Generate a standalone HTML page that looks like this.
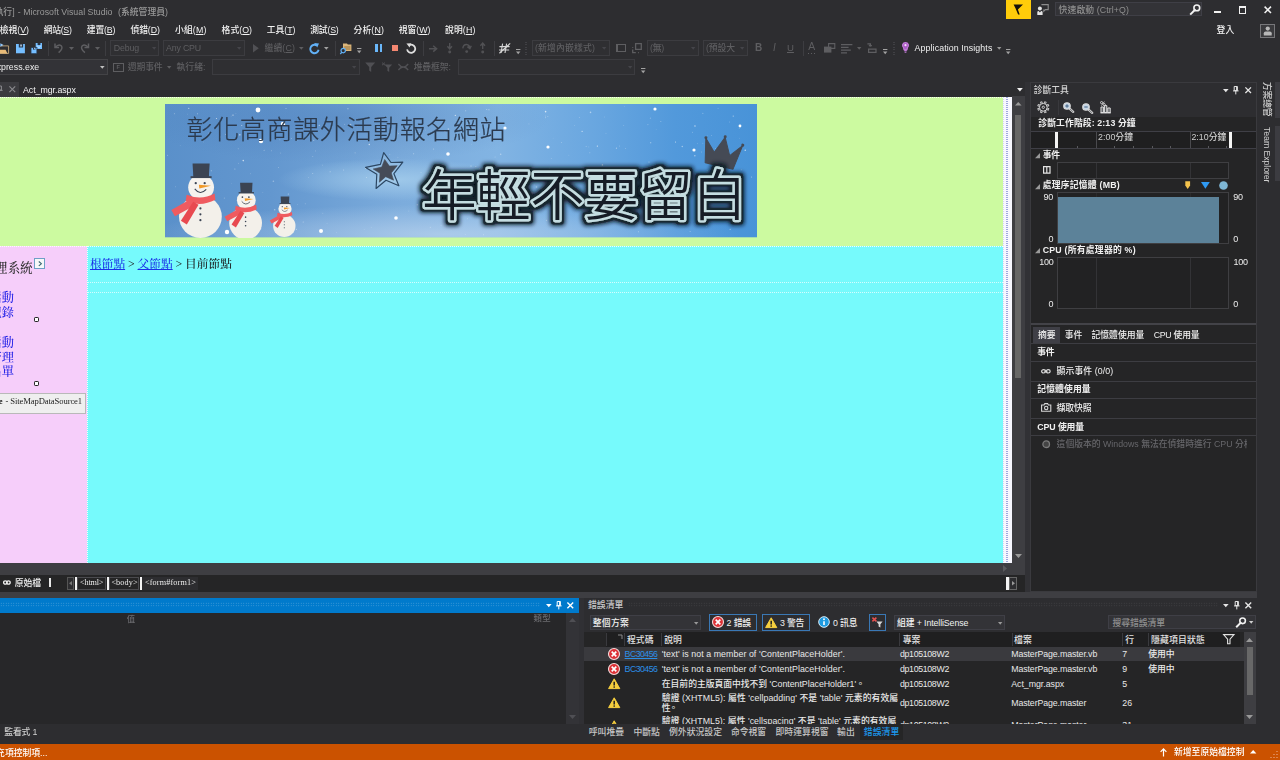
<!DOCTYPE html>
<html lang="zh-Hant">
<head>
<meta charset="utf-8">
<title>Microsoft Visual Studio</title>
<style>
*{box-sizing:border-box;margin:0;padding:0}
html,body{width:1280px;height:760px;overflow:hidden;background:#2d2d30}
body{position:relative;font-family:"Liberation Sans","Noto Sans CJK TC","Noto Sans CJK SC",sans-serif;font-size:8.8px;font-weight:500;color:#f1f1f1;line-height:12px}
.a{position:absolute}
.t{position:absolute;white-space:nowrap;line-height:12px;height:12px}
svg{position:absolute;overflow:visible;display:block}
u{text-decoration:underline}
</style>
</head>
<body>
<div id="t1" class="t" style="right:1265.4px;top:6.3px;color:#999">[執行]</div>
<div id="t2" class="t" style="left:17.8px;top:6.3px;color:#999;letter-spacing:0px">- Microsoft Visual Studio</div>
<div id="t3" class="t" style="left:118px;top:6.3px;color:#999;letter-spacing:0.02px">(系統管理員)</div>
<div class="a" style="left:1005.9px;top:0px;width:25.3px;height:19.2px;background:#ffcc0a"></div>
<svg style="left:1012px;top:4px" width="11" height="11" viewBox="0 0 11 11"><path d="M1.6 0.5H11L5.9 5.6L7.7 10.5H6.1L3.6 4.4Z" fill="#17120a"/></svg>
<svg style="left:1036.5px;top:4px" width="12" height="12" viewBox="0 0 12 12"><path d="M4.4 0.6H11.2V5.6H8.4L6.8 7.2V5.6" fill="none" stroke="#8c8c8c" stroke-width="1.1"/><circle cx="2.9" cy="4.4" r="2" fill="#e4e4e4"/><path d="M0.3 11V8.2Q0.3 6.9 1.6 6.9L2.9 8.6L4.2 6.9Q5.6 6.9 5.6 8.2V11Z" fill="#e4e4e4"/></svg>
<div class="a" style="left:1054.7px;top:1.7px;width:147.7px;height:14.8px;background:#333337;border:1px solid #3f3f46"></div>
<div id="t4" class="t" style="left:1058.6px;top:3.8px;color:#8f8f8f;letter-spacing:0.1px">快速啟動 (Ctrl+Q)</div>
<svg style="left:1189.5px;top:4px" width="11" height="11" viewBox="0 0 11 11"><circle cx="6.8" cy="3.9" r="2.9" fill="none" stroke="#f1f1f1" stroke-width="1.6"/><path d="M4.8 6L0.9 9.9" stroke="#f1f1f1" stroke-width="2" stroke-linecap="square"/></svg>
<div class="a" style="left:1214px;top:10.6px;width:7.2px;height:2.4px;background:#f1f1f1"></div>
<div class="a" style="left:1238.6px;top:6.3px;width:7.6px;height:7.4px;border:1px solid #f1f1f1;border-top-width:2.4px"></div>
<svg style="left:1263.6px;top:6.3px" width="7.6" height="7.6" viewBox="0 0 7.6 7.6"><path d="M0.6 0.6L7 7M7 0.6L0.6 7" stroke="#f1f1f1" stroke-width="1.5"/></svg>
<div id="t5" class="t" style="left:1216.6px;top:24.2px;color:#f2f2f2;letter-spacing:0.2px">登入</div>
<div class="a" style="left:1260px;top:23.6px;width:14.5px;height:14px;background:#3a3a3d;border:1px solid #77777a"></div>
<svg style="left:1262.5px;top:26px" width="9.5" height="10" viewBox="0 0 9.5 10"><circle cx="4.75" cy="2.6" r="2.1" fill="#b8b8b8"/><path d="M0.8 9.6V7.2Q0.8 5.4 2.6 5.4H6.9Q8.7 5.4 8.7 7.2V9.6Z" fill="#b8b8b8"/></svg>
<div id="t6" class="t" style="left:-0.2px;top:23.7px;color:#f2f2f2;letter-spacing:-0.03px">檢視(<u>V</u>)</div>
<div id="t7" class="t" style="left:43.8px;top:23.7px;color:#f2f2f2;letter-spacing:-0.33px">網站(<u>S</u>)</div>
<div id="t8" class="t" style="left:86.8px;top:23.7px;color:#f2f2f2;letter-spacing:-0.17px">建置(<u>B</u>)</div>
<div id="t9" class="t" style="left:130.5px;top:23.7px;color:#f2f2f2;letter-spacing:-0.13px">偵錯(<u>D</u>)</div>
<div id="t10" class="t" style="left:175px;top:23.7px;color:#f2f2f2;letter-spacing:0.14px">小組(<u>M</u>)</div>
<div id="t11" class="t" style="left:221.6px;top:23.7px;color:#f2f2f2;letter-spacing:0.02px">格式(<u>O</u>)</div>
<div id="t12" class="t" style="left:266.8px;top:23.7px;color:#f2f2f2;letter-spacing:-0.05px">工具(<u>T</u>)</div>
<div id="t13" class="t" style="left:310.2px;top:23.7px;color:#f2f2f2;letter-spacing:-0.19px">測試(<u>S</u>)</div>
<div id="t14" class="t" style="left:353.5px;top:23.7px;color:#f2f2f2;letter-spacing:0.14px">分析(<u>N</u>)</div>
<div id="t15" class="t" style="left:398.7px;top:23.7px;color:#f2f2f2;letter-spacing:-0.02px">視窗(<u>W</u>)</div>
<div id="t16" class="t" style="left:445px;top:23.7px;color:#f2f2f2;letter-spacing:0.12px">說明(<u>H</u>)</div>
<svg style="left:-3px;top:42.6px" width="12.4" height="11" viewBox="0 0 12.4 11"><path d="M0 2.9H11.6V10.4H0" fill="none" stroke="#d9b985" stroke-width=".8"/><path d="M0 6.8H8.6L10.4 10.4H0Z" fill="#e8bb78"/><path d="M3.4 0.2L6.6 2L3.4 3.8Z" fill="#9cc9f2"/><path d="M0 2H4" stroke="#4f8fd0" stroke-width="1.3"/></svg>
<svg style="left:15.6px;top:43.5px" width="8.9" height="9.3" viewBox="0 0 8.9 9.3"><path d="M0 0H8.9V9.3H0Z" fill="#75beff"/><path d="M2.8 0H7.1V3.5H2.8Z" fill="#26364a"/><path d="M4.4 0.4H5.7V2.6H4.4Z" fill="#e4f2ff"/></svg>
<svg style="left:31px;top:42.7px" width="11" height="10.7" viewBox="0 0 11 10.7"><path d="M4.7 0H11V6H4.7Z" fill="#75beff"/><path d="M6.6 0H9.4V2H6.6Z" fill="#26364a"/><path d="M6.2 2.9L8 4.6L9.8 2.9" fill="none" stroke="#e4f2ff" stroke-width=".8"/><path d="M0 4.5H5.9V10.7H0Z" fill="#75beff" stroke="#26364a" stroke-width=".8"/><path d="M2 4.5H4.4V6.6H2Z" fill="#26364a"/><path d="M3 4.8H3.7V6.2H3Z" fill="#e4f2ff"/></svg>
<div class="a" style="left:47.7px;top:41px;width:1px;height:15px;background:#3d3d41"></div>
<svg style="left:54px;top:43.4px" width="9.5" height="10" viewBox="0 0 9.5 10"><path d="M1 0.6V4.6H5" fill="none" stroke="#5e5e61" stroke-width="1.5"/><path d="M1.4 4.2Q4.6 0.6 7.2 2.8Q9.6 5.4 4.6 9.6" fill="none" stroke="#5e5e61" stroke-width="1.5"/></svg>
<svg style="left:68.5px;top:47px" width="5" height="3" viewBox="0 0 5 3"><path d="M0 0H5L2.5 3Z" fill="#5e5e61"/></svg>
<svg style="left:80px;top:43.4px" width="9.5" height="10" viewBox="0 0 9.5 10"><path d="M8.5 0.6V4.6H4.5" fill="none" stroke="#5e5e61" stroke-width="1.5"/><path d="M8.1 4.2Q4.9 0.6 2.3 2.8Q-0.1 5.4 4.9 9.6" fill="none" stroke="#5e5e61" stroke-width="1.5"/></svg>
<svg style="left:95.2px;top:47px" width="5" height="3" viewBox="0 0 5 3"><path d="M0 0H5L2.5 3Z" fill="#5e5e61"/></svg>
<div class="a" style="left:105px;top:41px;width:1px;height:15px;background:#3d3d41"></div>
<div class="a" style="left:110px;top:40.3px;width:48.7px;height:15.8px;background:#2f2f32;border:1px solid #3c3c40"></div>
<div id="t17" class="t" style="left:113.7px;top:42.2px;color:#5e5e61;letter-spacing:-0.13px">Debug</div>
<svg style="left:151.6px;top:47.15px" width="4.4" height="2.7" viewBox="0 0 4.4 2.7"><path d="M0 0H4.4L2.2 2.7Z" fill="#45454a"/></svg>
<div class="a" style="left:163px;top:40.3px;width:81.5px;height:15.8px;background:#2f2f32;border:1px solid #3c3c40"></div>
<div id="t18" class="t" style="left:166px;top:42.2px;color:#5e5e61;letter-spacing:-0.17px">Any CPU</div>
<svg style="left:237.4px;top:47.15px" width="4.4" height="2.7" viewBox="0 0 4.4 2.7"><path d="M0 0H4.4L2.2 2.7Z" fill="#45454a"/></svg>
<svg style="left:252.7px;top:44px" width="5.8" height="8.4" viewBox="0 0 5.8 8.4"><path d="M0 0L5.8 4.2L0 8.4Z" fill="#505054"/></svg>
<div id="t19" class="t" style="left:264.5px;top:42.2px;color:#5e5e61;letter-spacing:0.14px">繼續(<u>C</u>)</div>
<svg style="left:298.5px;top:47.1px" width="4.6" height="2.8" viewBox="0 0 4.6 2.8"><path d="M0 0H4.6L2.3 2.8Z" fill="#5e5e61"/></svg>
<svg style="left:309px;top:42.6px" width="10.8" height="11.4" viewBox="0 0 10.8 11.4"><path d="M7.6 2.4A4.2 4.2 0 1 0 9.6 6.8" fill="none" stroke="#62b1f6" stroke-width="1.9"/><path d="M5.2 0L10 0.4L8.2 4.6Z" fill="#62b1f6"/></svg>
<svg style="left:324.2px;top:47.1px" width="4.6" height="2.8" viewBox="0 0 4.6 2.8"><path d="M0 0H4.6L2.3 2.8Z" fill="#a2a2a2"/></svg>
<div class="a" style="left:334.7px;top:41px;width:1px;height:15px;background:#3d3d41"></div>
<svg style="left:340px;top:42.6px" width="11.5" height="11.4" viewBox="0 0 11.5 11.4"><path d="M3 0.6H7L7.8 1.6H11.4V8H3Z" fill="#dcb67a"/><path d="M4.2 3H10.4V7H4.2Z" fill="#b8935a"/><circle cx="3.2" cy="7.6" r="2.2" fill="#2d2d30" stroke="#62b1f6" stroke-width="1.2"/><path d="M1.8 9.2L0.3 11" stroke="#62b1f6" stroke-width="1.3"/></svg>
<svg style="left:356.8px;top:48.2px" width="4.4" height="5.6" viewBox="0 0 4.4 5.6"><path d="M0 0H4.4V1H0Z M0 2.4H4.4L2.2 5.2Z" fill="#a2a2a2"/></svg>
<div class="a" style="left:375.4px;top:43.8px;width:2.5px;height:7.8px;background:#6ab7fa"></div>
<div class="a" style="left:379.6px;top:43.8px;width:2.5px;height:7.8px;background:#6ab7fa"></div>
<div class="a" style="left:391.9px;top:44.8px;width:6.4px;height:6.4px;background:#f48771"></div>
<svg style="left:405.6px;top:42.8px" width="10.4" height="11" viewBox="0 0 10.4 11"><path d="M3 2.2A4.1 4.1 0 1 1 1.1 6.4" fill="none" stroke="#dedede" stroke-width="1.8"/><path d="M0.4 0.4L5.2 0.2L3.6 4.4Z" fill="#dedede"/></svg>
<div class="a" style="left:422.6px;top:41px;width:1px;height:15px;background:#3d3d41"></div>
<svg style="left:428.5px;top:44.6px" width="9" height="7.4" viewBox="0 0 9 7.4"><path d="M0 3.7H6.4M4.2 0.8L7.6 3.7L4.2 6.6" fill="none" stroke="#515154" stroke-width="1.5"/></svg>
<svg style="left:447.4px;top:43px" width="5.4" height="10.6" viewBox="0 0 5.4 10.6"><path d="M2.7 0V5M0.4 3.2L2.7 6L5 3.2" fill="none" stroke="#515154" stroke-width="1.4"/><circle cx="2.7" cy="9" r="1.5" fill="#515154"/></svg>
<svg style="left:461.6px;top:43.4px" width="9.4" height="10" viewBox="0 0 9.4 10"><path d="M0.8 5.4Q1.4 1.2 5.2 1.6Q7.6 2.2 7.8 4.8M5.4 3.6L7.9 5.6L9.3 2.8" fill="none" stroke="#515154" stroke-width="1.4"/><circle cx="4.7" cy="8.6" r="1.4" fill="#515154"/></svg>
<svg style="left:479.6px;top:43px" width="5.4" height="10.6" viewBox="0 0 5.4 10.6"><path d="M2.7 6V1M0.4 2.8L2.7 0L5 2.8" fill="none" stroke="#515154" stroke-width="1.4"/><circle cx="2.7" cy="9" r="1.5" fill="#515154"/></svg>
<div class="a" style="left:494px;top:41px;width:1px;height:15px;background:#3d3d41"></div>
<svg style="left:499px;top:43px" width="11.6" height="10.6" viewBox="0 0 11.6 10.6"><path d="M3.6 0.6L2 10M7.6 0.6L6 10M0.4 3.6H10.6M0 7H10.2" stroke="#d6d6d6" stroke-width="1.1" fill="none"/><path d="M0.4 10.2L11.2 0.4" stroke="#d6d6d6" stroke-width="1.2"/></svg>
<svg style="left:515.8px;top:48.6px" width="4.4" height="5.6" viewBox="0 0 4.4 5.6"><path d="M0 0H4.4V1H0Z M0 2.4H4.4L2.2 5.2Z" fill="#a2a2a2"/></svg>
<div class="a" style="left:525px;top:42px;width:1.6px;height:13px;background:repeating-linear-gradient(#404044 0 1px,transparent 1px 2.4px)"></div>
<div class="a" style="left:532px;top:40.2px;width:77.6px;height:15.8px;background:#2f2f32;border:1px solid #3c3c40"></div>
<div id="t20" class="t" style="left:535px;top:42.2px;color:#5e5e61;letter-spacing:0.17px">(新增內嵌樣式)</div>
<svg style="left:602.4px;top:47.15px" width="4.4" height="2.7" viewBox="0 0 4.4 2.7"><path d="M0 0H4.4L2.2 2.7Z" fill="#45454a"/></svg>
<div class="a" style="left:615.5px;top:44px;width:10.4px;height:8px;border:1px solid #5e5e61;border-left-width:2px"></div>
<svg style="left:632px;top:43px" width="10" height="10.4" viewBox="0 0 10 10.4"><path d="M3.6 0.7H9.3V6.4H3.6Z M0.7 6.6V9.7H3.8M0.7 4.2V5M6 9.7H6.8" fill="none" stroke="#5e5e61" stroke-width="1.3"/></svg>
<div class="a" style="left:647px;top:40.2px;width:51.7px;height:15.8px;background:#2f2f32;border:1px solid #3c3c40"></div>
<div id="t21" class="t" style="left:650px;top:42.2px;color:#5e5e61;letter-spacing:-0.22px">(無)</div>
<svg style="left:691.4px;top:47.15px" width="4.4" height="2.7" viewBox="0 0 4.4 2.7"><path d="M0 0H4.4L2.2 2.7Z" fill="#45454a"/></svg>
<div class="a" style="left:703px;top:40.2px;width:45px;height:15.8px;background:#2f2f32;border:1px solid #3c3c40"></div>
<div id="t22" class="t" style="left:706px;top:42.2px;color:#5e5e61;letter-spacing:-0.08px">(預設大</div>
<svg style="left:740.4px;top:47.15px" width="4.4" height="2.7" viewBox="0 0 4.4 2.7"><path d="M0 0H4.4L2.2 2.7Z" fill="#45454a"/></svg>
<div id="t23" class="t" style="left:755px;top:42.2px;font-size:10px;color:#5e5e61;font-weight:bold">B</div>
<div id="t24" class="t" style="left:773px;top:42.2px;font-size:10px;color:#5e5e61;font-style:italic;font-family:"Liberation Serif",serif">I</div>
<div id="t25" class="t" style="left:787px;top:41.9px;font-size:9.6px;color:#5e5e61;text-decoration:underline">U</div>
<div class="a" style="left:802.6px;top:41px;width:1px;height:15px;background:#3d3d41"></div>
<div id="t26" class="t" style="left:808.2px;top:41.4px;font-size:10.4px;color:#5e5e61">A</div>
<div class="a" style="left:808.4px;top:53px;width:8.6px;height:1.4px;background:repeating-linear-gradient(90deg,#5e5e61 0 1.4px,transparent 1.4px 2.9px)"></div>
<svg style="left:824px;top:43.4px" width="11.4" height="9.6" viewBox="0 0 11.4 9.6"><path d="M4.6 0.6H10.8V5.4H4.6Z" fill="none" stroke="#5e5e61" stroke-width="1.1"/><path d="M0 3.6H7.4V9.6H0Z" fill="#5e5e61"/></svg>
<svg style="left:840.8px;top:43.6px" width="11.4" height="9.4" viewBox="0 0 11.4 9.4"><path d="M0 0.7H11.4M0 3.4H7.6M0 6.1H9.8M0 8.8H6" stroke="#5e5e61" stroke-width="1.2"/></svg>
<svg style="left:856.8px;top:47.15px" width="4.4" height="2.7" viewBox="0 0 4.4 2.7"><path d="M0 0H4.4L2.2 2.7Z" fill="#5e5e61"/></svg>
<svg style="left:866.5px;top:43.4px" width="9.6" height="10" viewBox="0 0 9.6 10"><path d="M0.4 0.8H3.4V3.4M1.6 6.2H9V9.4H1.6Z M3.4 3.4L2 2.2M3.4 3.4L4.8 2.2" fill="none" stroke="#5e5e61" stroke-width="1.2"/></svg>
<svg style="left:882.8px;top:48.6px" width="4.4" height="5.6" viewBox="0 0 4.4 5.6"><path d="M0 0H4.4V1H0Z M0 2.4H4.4L2.2 5.2Z" fill="#a2a2a2"/></svg>
<div class="a" style="left:893px;top:42px;width:1.6px;height:13px;background:repeating-linear-gradient(#404044 0 1px,transparent 1px 2.4px)"></div>
<svg style="left:902px;top:42.2px" width="7" height="11.8" viewBox="0 0 7 11.8"><path d="M3.5 0.5A3 3 0 0 1 5.4 5.8L5 7.6H2L1.6 5.8A3 3 0 0 1 3.5 0.5Z" fill="#a95cc4" stroke="#c27ad7" stroke-width="1.2"/><path d="M2.2 8.6H4.8M2.6 10.2H4.4" stroke="#c27ad7" stroke-width="1.1"/><circle cx="3.5" cy="3.2" r="1.1" fill="#f0dcf7"/></svg>
<div id="t27" class="t" style="left:914.6px;top:42.2px;color:#f1f1f1;letter-spacing:0.1px">Application Insights</div>
<svg style="left:996.8px;top:47.15px" width="4.4" height="2.7" viewBox="0 0 4.4 2.7"><path d="M0 0H4.4L2.2 2.7Z" fill="#999"/></svg>
<svg style="left:1005.8px;top:48.6px" width="4.4" height="5.6" viewBox="0 0 4.4 5.6"><path d="M0 0H4.4V1H0Z M0 2.4H4.4L2.2 5.2Z" fill="#a2a2a2"/></svg>
<div class="a" style="left:-4px;top:59.2px;width:111.6px;height:16.2px;background:#333337;border:1px solid #434346"></div>
<div id="t28" class="t" style="right:1240.8px;top:61.3px;color:#f1f1f1">iisexpress.exe</div>
<svg style="left:99.7px;top:66.3px" width="4.6" height="2.8" viewBox="0 0 4.6 2.8"><path d="M0 0H4.6L2.3 2.8Z" fill="#c0c0c0"/></svg>
<div class="a" style="left:113.3px;top:63.4px;width:10.4px;height:8.2px;border:1px solid #5e5e61"></div>
<div id="t29" class="t" style="left:116.4px;top:61.4px;font-size:5.5px;color:#5e5e61;font-weight:bold">F</div>
<div id="t30" class="t" style="left:127.8px;top:61.3px;color:#5e5e61;letter-spacing:-0.12px">週期事件</div>
<svg style="left:167.3px;top:66.25px" width="4.4" height="2.7" viewBox="0 0 4.4 2.7"><path d="M0 0H4.4L2.2 2.7Z" fill="#5e5e61"/></svg>
<div id="t31" class="t" style="left:176.5px;top:61.3px;color:#5e5e61;letter-spacing:0.04px">執行緒:</div>
<div class="a" style="left:212px;top:59.2px;width:148px;height:16.2px;background:#2f2f32;border:1px solid #3c3c40"></div>
<svg style="left:352.4px;top:66.25px" width="4.4" height="2.7" viewBox="0 0 4.4 2.7"><path d="M0 0H4.4L2.2 2.7Z" fill="#45454a"/></svg>
<svg style="left:365px;top:62.2px" width="10.4" height="10.4" viewBox="0 0 10.4 10.4"><path d="M0.2 0.4H10.2L6.2 5V10L4.2 8.6V5Z" fill="#505054"/></svg>
<svg style="left:381.6px;top:62.2px" width="10.4" height="10.4" viewBox="0 0 10.4 10.4"><path d="M2.4 2.4H10.2L7.2 5.8V10L5.4 8.8V5.8Z" fill="#505054"/><path d="M0 0.6L3 3.2M3 0.6L0 3.2" stroke="#505054" stroke-width="1"/></svg>
<svg style="left:398px;top:63.4px" width="10.6" height="8" viewBox="0 0 10.6 8"><path d="M0.4 1Q2.6 4 5.3 4Q8 4 10.2 1M0.4 7Q2.6 4 5.3 4Q8 4 10.2 7" fill="none" stroke="#505054" stroke-width="1.3"/></svg>
<div id="t32" class="t" style="left:413.7px;top:61.3px;color:#5e5e61;letter-spacing:-0.11px">堆疊框架:</div>
<div class="a" style="left:457.8px;top:59.2px;width:177.6px;height:16.2px;background:#2f2f32;border:1px solid #3c3c40"></div>
<svg style="left:627.8px;top:66.25px" width="4.4" height="2.7" viewBox="0 0 4.4 2.7"><path d="M0 0H4.4L2.2 2.7Z" fill="#45454a"/></svg>
<svg style="left:641.1px;top:67.8px" width="4.4" height="5.6" viewBox="0 0 4.4 5.6"><path d="M0 0H4.4V1H0Z M0 2.4H4.4L2.2 5.2Z" fill="#a2a2a2"/></svg>
<div class="a" style="left:0px;top:81.8px;width:19.2px;height:14.8px;background:#3b3b3f"></div>
<svg style="left:-4px;top:85px" width="7" height="8" viewBox="0 0 7 8"><path d="M1 1H5.4V5H1Z M0 5.4H6.6 M3.2 5.4V8" fill="none" stroke="#8a8a8e" stroke-width="1"/></svg>
<svg style="left:8.8px;top:85.6px" width="6.6" height="6.6" viewBox="0 0 6.6 6.6"><path d="M0.4 0.4L6.2 6.2M6.2 0.4L0.4 6.2" stroke="#8a8a8e" stroke-width="1.1"/></svg>
<div id="t33" class="t" style="left:23px;top:84px;color:#f1f1f1;letter-spacing:-0.04px">Act_mgr.aspx</div>
<svg style="left:1017px;top:87.7px" width="5.8" height="3.4" viewBox="0 0 5.8 3.4"><path d="M0 0H5.8L2.9 3.4Z" fill="#f1f1f1"/></svg>
<div class="a" style="left:0px;top:96.8px;width:1003.2px;height:149.4px;background:#ccfaa0"></div>
<svg style="left:164.9px;top:104.3px;overflow:hidden" width="592.6" height="133.3" viewBox="0 0 592.6 133.3"><defs><linearGradient id="bg1" x1="0" y1="0" x2="1" y2="0"><stop offset="0" stop-color="#5a90ca"/><stop offset=".18" stop-color="#6397cf"/><stop offset=".4" stop-color="#7cacdc"/><stop offset=".56" stop-color="#82b4e3"/><stop offset=".72" stop-color="#6aa7e0"/><stop offset=".86" stop-color="#5299db"/><stop offset="1" stop-color="#4893d8"/></linearGradient><radialGradient id="bg2" cx=".47" cy=".95" r=".5" gradientTransform="translate(0 .55) scale(1 .45)"><stop offset="0" stop-color="#b9d3ee" stop-opacity=".75"/><stop offset="1" stop-color="#b9d3ee" stop-opacity="0"/></radialGradient><radialGradient id="bg4" cx=".39" cy=".56" r=".2" gradientTransform="translate(0 .12) scale(1 .8)"><stop offset="0" stop-color="#a4cdec" stop-opacity=".85"/><stop offset=".5" stop-color="#a4cdec" stop-opacity=".45"/><stop offset="1" stop-color="#a4cdec" stop-opacity="0"/></radialGradient><radialGradient id="bg3" cx=".3" cy=".1" r=".35"><stop offset="0" stop-color="#3f6fae" stop-opacity=".35"/><stop offset="1" stop-color="#3f6fae" stop-opacity="0"/></radialGradient><filter id="glow" x="-10%" y="-30%" width="120%" height="160%"><feGaussianBlur stdDeviation="2.6"/></filter><filter id="sg" x="-5%" y="-25%" width="110%" height="150%"><feMorphology in="SourceAlpha" operator="dilate" radius="1.7" result="d1"/><feGaussianBlur in="d1" stdDeviation=".5" result="d1b"/><feFlood flood-color="#1a2732" flood-opacity=".9"/><feComposite in2="d1b" operator="in" result="ol"/><feMorphology in="SourceAlpha" operator="dilate" radius="3" result="d2"/><feGaussianBlur in="d2" stdDeviation="2.2" result="b"/><feFlood flood-color="#0c141c"/><feComposite in2="b" operator="in" result="gl"/><feMerge><feMergeNode in="gl"/><feMergeNode in="ol"/><feMergeNode in="SourceGraphic"/></feMerge></filter><filter id="soft"><feGaussianBlur stdDeviation=".7"/></filter></defs><rect width="592.6" height="133.3" fill="url(#bg1)"/><rect width="592.6" height="133.3" fill="url(#bg2)"/><rect width="592.6" height="133.3" fill="url(#bg3)"/><rect width="592.6" height="133.3" fill="url(#bg4)"/><g fill="#fff"><circle cx="192.61" cy="21.5" r="0.8" opacity="0.27"/><circle cx="485.4" cy="14.17" r="0.6" opacity="0.28"/><circle cx="300.68" cy="6.85" r="0.5" opacity="0.46"/><circle cx="143.65" cy="73.25" r="0.35" opacity="0.66"/><circle cx="74.87" cy="30.86" r="0.8" opacity="0.54"/><circle cx="38.41" cy="77.71" r="0.35" opacity="0.74"/><circle cx="29.42" cy="113" r="0.45" opacity="0.46"/><circle cx="320.25" cy="75.82" r="0.6" opacity="0.66"/><circle cx="108.38" cy="77.2" r="0.8" opacity="0.34"/><circle cx="59.35" cy="94.08" r="0.6" opacity="0.28"/><circle cx="123.23" cy="89.98" r="0.5" opacity="0.64"/><circle cx="276.05" cy="121.4" r="0.45" opacity="0.4"/><circle cx="469.57" cy="92.38" r="0.4" opacity="0.29"/><circle cx="178.73" cy="66.02" r="0.45" opacity="0.61"/><circle cx="171.48" cy="128.74" r="0.35" opacity="0.51"/><circle cx="99.1" cy="46.23" r="0.5" opacity="0.46"/><circle cx="568.24" cy="12.04" r="0.6" opacity="0.54"/><circle cx="517.31" cy="42.57" r="0.8" opacity="0.43"/><circle cx="294.34" cy="105.04" r="0.35" opacity="0.67"/><circle cx="558.04" cy="63.3" r="0.8" opacity="0.28"/><circle cx="432.36" cy="42.03" r="0.6" opacity="0.75"/><circle cx="485.78" cy="38.8" r="0.5" opacity="0.69"/><circle cx="206.25" cy="123.63" r="0.45" opacity="0.33"/><circle cx="70.92" cy="9.62" r="0.45" opacity="0.31"/><circle cx="147.75" cy="52.55" r="0.5" opacity="0.29"/><circle cx="266.39" cy="73.04" r="0.4" opacity="0.66"/><circle cx="510.54" cy="38" r="0.5" opacity="0.74"/><circle cx="403.85" cy="51.19" r="0.4" opacity="0.33"/><circle cx="105.72" cy="31.99" r="0.4" opacity="0.26"/><circle cx="491.18" cy="25.58" r="0.45" opacity="0.25"/><circle cx="248.59" cy="49.74" r="0.6" opacity="0.41"/><circle cx="75.86" cy="113.09" r="0.6" opacity="0.58"/><circle cx="437.44" cy="61.04" r="0.8" opacity="0.65"/><circle cx="232.95" cy="53.59" r="0.35" opacity="0.49"/><circle cx="237.7" cy="26.65" r="0.4" opacity="0.47"/><circle cx="66.7" cy="79.67" r="0.35" opacity="0.25"/><circle cx="91.03" cy="15.12" r="0.45" opacity="0.56"/><circle cx="43.39" cy="28.89" r="0.5" opacity="0.32"/><circle cx="150.48" cy="46.92" r="0.45" opacity="0.49"/><circle cx="69.9" cy="65.11" r="0.5" opacity="0.49"/><circle cx="185.56" cy="20.63" r="0.8" opacity="0.42"/><circle cx="157.84" cy="109.17" r="0.4" opacity="0.51"/><circle cx="122.79" cy="125.1" r="0.45" opacity="0.32"/><circle cx="321.71" cy="5.5" r="0.6" opacity="0.4"/><circle cx="380.42" cy="13.77" r="0.45" opacity="0.51"/><circle cx="536.6" cy="47.99" r="0.4" opacity="0.52"/><circle cx="460.55" cy="44.63" r="0.4" opacity="0.56"/><circle cx="466.05" cy="100.05" r="0.4" opacity="0.65"/><circle cx="483.67" cy="97.67" r="0.4" opacity="0.35"/><circle cx="292.05" cy="96.52" r="0.35" opacity="0.65"/><circle cx="279.96" cy="27.04" r="0.6" opacity="0.73"/><circle cx="265.24" cy="123.16" r="0.45" opacity="0.73"/><circle cx="216.62" cy="30.51" r="0.4" opacity="0.49"/><circle cx="200.79" cy="64.41" r="0.6" opacity="0.67"/><circle cx="284.22" cy="86.43" r="0.8" opacity="0.29"/><circle cx="390.82" cy="119.63" r="0.8" opacity="0.63"/><circle cx="283.37" cy="25.08" r="0.8" opacity="0.42"/><circle cx="473.36" cy="127.64" r="0.5" opacity="0.48"/><circle cx="439.54" cy="12.98" r="0.4" opacity="0.34"/><circle cx="76.77" cy="21.54" r="0.5" opacity="0.65"/><circle cx="88.04" cy="108.87" r="0.5" opacity="0.58"/><circle cx="208.25" cy="72.94" r="0.4" opacity="0.26"/><circle cx="472.5" cy="95.92" r="0.35" opacity="0.51"/><circle cx="551.53" cy="58.09" r="0.4" opacity="0.66"/><circle cx="126.22" cy="34.56" r="0.45" opacity="0.5"/><circle cx="451.5" cy="44.15" r="0.6" opacity="0.46"/><circle cx="79.15" cy="119.67" r="0.45" opacity="0.7"/><circle cx="391.93" cy="107.39" r="0.6" opacity="0.46"/><circle cx="542.17" cy="66.86" r="0.6" opacity="0.33"/><circle cx="302.51" cy="114.85" r="0.4" opacity="0.55"/><circle cx="458.78" cy="21.37" r="0.4" opacity="0.49"/><circle cx="428.85" cy="73.95" r="0.45" opacity="0.59"/><circle cx="314.39" cy="64.39" r="0.35" opacity="0.69"/><circle cx="35.45" cy="26.74" r="0.35" opacity="0.64"/><circle cx="300.84" cy="74.63" r="0.35" opacity="0.47"/><circle cx="362.53" cy="67.37" r="0.6" opacity="0.35"/><circle cx="165.15" cy="67.7" r="0.5" opacity="0.5"/><circle cx="147.77" cy="69.65" r="0.45" opacity="0.71"/><circle cx="527.48" cy="28.19" r="0.5" opacity="0.32"/><circle cx="73.59" cy="59.17" r="0.35" opacity="0.59"/><circle cx="254.12" cy="29.5" r="0.45" opacity="0.64"/><circle cx="529.99" cy="21.97" r="0.8" opacity="0.57"/><circle cx="217.54" cy="34.73" r="0.4" opacity="0.73"/><circle cx="131.25" cy="125.16" r="0.5" opacity="0.69"/><circle cx="97.82" cy="88.35" r="0.4" opacity="0.33"/><circle cx="255.99" cy="68.67" r="0.45" opacity="0.46"/><circle cx="211.9" cy="13.92" r="0.45" opacity="0.26"/><circle cx="328.11" cy="58.95" r="0.35" opacity="0.44"/><circle cx="306.56" cy="40.2" r="0.35" opacity="0.31"/><circle cx="542.66" cy="31.55" r="0.35" opacity="0.29"/><circle cx="162.05" cy="119.13" r="0.4" opacity="0.39"/><circle cx="78.26" cy="56.6" r="0.8" opacity="0.66"/><circle cx="154.22" cy="21.31" r="0.6" opacity="0.54"/><circle cx="414.27" cy="13.57" r="0.35" opacity="0.65"/><circle cx="109.92" cy="117.76" r="0.45" opacity="0.72"/><circle cx="375.43" cy="105.65" r="0.35" opacity="0.55"/><circle cx="132.91" cy="36.19" r="0.35" opacity="0.48"/><circle cx="201.62" cy="73.51" r="0.45" opacity="0.56"/><circle cx="27.43" cy="93.74" r="0.35" opacity="0.73"/><circle cx="156.15" cy="25.42" r="0.45" opacity="0.56"/><circle cx="314.6" cy="28.62" r="0.5" opacity="0.5"/><circle cx="106.71" cy="46.87" r="0.35" opacity="0.75"/><circle cx="23.75" cy="4.38" r="0.6" opacity="0.53"/><circle cx="113.51" cy="63.39" r="0.5" opacity="0.3"/><circle cx="484.02" cy="57.88" r="0.5" opacity="0.52"/><circle cx="525.1" cy="127.46" r="0.45" opacity="0.59"/><circle cx="580.26" cy="46.31" r="0.8" opacity="0.61"/><circle cx="84.24" cy="129.93" r="0.35" opacity="0.67"/><circle cx="10.39" cy="82.87" r="0.45" opacity="0.47"/><circle cx="34.61" cy="88.01" r="0.5" opacity="0.69"/><circle cx="396.68" cy="38.45" r="0.4" opacity="0.6"/><circle cx="28.63" cy="25.97" r="0.45" opacity="0.47"/><circle cx="156.94" cy="126.36" r="0.6" opacity="0.41"/><circle cx="22.28" cy="116.09" r="0.4" opacity="0.43"/><circle cx="2.63" cy="51.34" r="0.5" opacity="0.39"/><circle cx="388.13" cy="34.09" r="0.35" opacity="0.3"/><circle cx="482.91" cy="20.6" r="0.6" opacity="0.27"/><circle cx="15.24" cy="41.34" r="0.4" opacity="0.29"/><circle cx="565.67" cy="112.32" r="0.4" opacity="0.58"/><circle cx="423.43" cy="115.67" r="0.5" opacity="0.63"/><circle cx="426.19" cy="65.9" r="0.45" opacity="0.61"/><circle cx="380.6" cy="7.66" r="0.8" opacity="0.7"/><circle cx="371.25" cy="96.89" r="0.6" opacity="0.32"/><circle cx="310.28" cy="67.22" r="0.35" opacity="0.66"/><circle cx="345.78" cy="117.44" r="0.8" opacity="0.73"/><circle cx="380.4" cy="13" r="0.35" opacity="0.32"/><circle cx="214.31" cy="15.57" r="0.5" opacity="0.53"/><circle cx="371.5" cy="82.97" r="0.8" opacity="0.37"/><circle cx="157.27" cy="61.08" r="0.35" opacity="0.62"/><circle cx="298.05" cy="71.2" r="0.8" opacity="0.51"/><circle cx="440.94" cy="63.27" r="0.35" opacity="0.67"/><circle cx="140.19" cy="99.81" r="0.4" opacity="0.62"/><circle cx="576.32" cy="65.87" r="0.5" opacity="0.29"/><circle cx="537.9" cy="39.15" r="0.35" opacity="0.56"/><circle cx="380.33" cy="12.02" r="0.4" opacity="0.42"/><circle cx="385.49" cy="91.59" r="0.6" opacity="0.53"/><circle cx="9.34" cy="9.84" r="0.45" opacity="0.74"/><circle cx="60.58" cy="30.15" r="0.5" opacity="0.4"/><circle cx="306.03" cy="62.08" r="0.5" opacity="0.63"/><circle cx="586.66" cy="73" r="0.45" opacity="0.74"/><circle cx="553.08" cy="4.26" r="0.5" opacity="0.29"/><circle cx="300.2" cy="130.6" r="0.45" opacity="0.44"/><circle cx="541.48" cy="122.32" r="0.35" opacity="0.54"/><circle cx="85.43" cy="69.76" r="0.45" opacity="0.32"/><circle cx="484.78" cy="67.78" r="0.35" opacity="0.6"/><circle cx="138.19" cy="118.07" r="0.5" opacity="0.45"/><circle cx="95.63" cy="124.83" r="0.8" opacity="0.48"/><circle cx="179.73" cy="20.19" r="0.45" opacity="0.44"/><circle cx="73.17" cy="44.84" r="0.45" opacity="0.63"/><circle cx="495.9" cy="17.52" r="0.4" opacity="0.61"/><circle cx="532.66" cy="39.48" r="0.45" opacity="0.28"/><circle cx="231.65" cy="114.49" r="0.35" opacity="0.43"/><circle cx="253.95" cy="37.58" r="0.35" opacity="0.39"/><circle cx="32.38" cy="87.59" r="0.8" opacity="0.72"/><circle cx="148.75" cy="36.36" r="0.6" opacity="0.41"/><circle cx="457.1" cy="103.52" r="0.5" opacity="0.69"/><circle cx="479.92" cy="83.57" r="0.6" opacity="0.52"/><circle cx="425.54" cy="8.4" r="0.8" opacity="0.46"/><circle cx="363.94" cy="19.92" r="0.45" opacity="0.49"/><circle cx="538.75" cy="73.13" r="0.4" opacity="0.49"/><circle cx="204.28" cy="40.5" r="0.8" opacity="0.62"/><circle cx="386.25" cy="54.52" r="0.4" opacity="0.4"/><circle cx="330.04" cy="52.99" r="0.4" opacity="0.57"/><circle cx="46.25" cy="66.73" r="0.5" opacity="0.53"/><circle cx="268.63" cy="45.04" r="0.5" opacity="0.46"/><circle cx="324.43" cy="33.56" r="0.4" opacity="0.42"/><circle cx="55.62" cy="32.92" r="0.45" opacity="0.65"/><circle cx="120.98" cy="4.6" r="0.5" opacity="0.44"/><circle cx="441" cy="29.15" r="0.45" opacity="0.42"/><circle cx="38.53" cy="37.88" r="0.45" opacity="0.31"/><circle cx="298.3" cy="83.41" r="0.4" opacity="0.3"/><circle cx="529.85" cy="51.72" r="0.8" opacity="0.47"/><circle cx="563.49" cy="111.73" r="0.35" opacity="0.31"/><circle cx="252.27" cy="100.75" r="0.5" opacity="0.73"/><circle cx="290.31" cy="11.46" r="0.6" opacity="0.68"/><circle cx="574.26" cy="34.13" r="0.35" opacity="0.36"/><circle cx="91.51" cy="127.67" r="0.35" opacity="0.72"/><circle cx="426.81" cy="85.7" r="0.5" opacity="0.29"/><circle cx="459.26" cy="2.18" r="0.4" opacity="0.37"/><circle cx="543.46" cy="85.46" r="0.45" opacity="0.73"/><circle cx="370.74" cy="70.3" r="0.5" opacity="0.6"/><circle cx="68" cy="11.1" r="0.6" opacity="0.72"/><circle cx="114.84" cy="35.73" r="0.6" opacity="0.25"/><circle cx="318.36" cy="130.83" r="0.45" opacity="0.73"/><circle cx="381.4" cy="116.27" r="0.5" opacity="0.51"/><circle cx="323.97" cy="5.79" r="0.5" opacity="0.6"/><circle cx="182.93" cy="4.82" r="0.5" opacity="0.69"/><circle cx="382.92" cy="12.49" r="0.4" opacity="0.58"/><circle cx="546.55" cy="31.32" r="0.35" opacity="0.6"/><circle cx="424.81" cy="48.85" r="0.5" opacity="0.35"/><circle cx="471.15" cy="97.57" r="0.6" opacity="0.28"/><circle cx="293.77" cy="27.91" r="0.4" opacity="0.37"/><circle cx="132.34" cy="100.33" r="0.45" opacity="0.3"/><circle cx="369.05" cy="80.89" r="0.4" opacity="0.49"/><circle cx="537.86" cy="9.29" r="0.6" opacity="0.32"/><circle cx="233.59" cy="29.53" r="0.6" opacity="0.32"/><circle cx="32.51" cy="9.78" r="0.5" opacity="0.47"/><circle cx="421.1" cy="42.63" r="0.35" opacity="0.75"/><circle cx="550.34" cy="44.57" r="0.4" opacity="0.58"/><circle cx="310.9" cy="62.46" r="0.45" opacity="0.58"/><circle cx="224.86" cy="50.34" r="0.45" opacity="0.47"/><circle cx="66.13" cy="12.12" r="0.35" opacity="0.43"/><circle cx="564.42" cy="18" r="0.4" opacity="0.44"/><circle cx="454.48" cy="41.91" r="0.5" opacity="0.29"/><circle cx="417.11" cy="27.31" r="0.6" opacity="0.71"/><circle cx="115.62" cy="49.1" r="0.5" opacity="0.27"/><circle cx="243.8" cy="106.97" r="0.5" opacity="0.27"/><circle cx="22.52" cy="10.09" r="0.35" opacity="0.38"/><circle cx="441.85" cy="118.18" r="0.45" opacity="0.43"/><circle cx="199.16" cy="125.32" r="0.35" opacity="0.38"/><circle cx="423.81" cy="42.92" r="0.45" opacity="0.4"/><circle cx="426.72" cy="79.01" r="0.8" opacity="0.72"/><circle cx="40.45" cy="108.8" r="0.35" opacity="0.49"/><circle cx="565.16" cy="125.34" r="0.5" opacity="0.64"/><circle cx="539.71" cy="107.35" r="0.4" opacity="0.71"/><circle cx="109.68" cy="105.77" r="0.8" opacity="0.4"/><circle cx="409.38" cy="21.57" r="0.4" opacity="0.41"/><circle cx="190.09" cy="48.79" r="0.6" opacity="0.29"/><circle cx="118.14" cy="99.35" r="0.4" opacity="0.45"/><circle cx="384.32" cy="64.28" r="0.6" opacity="0.41"/><circle cx="578.98" cy="116.23" r="0.35" opacity="0.38"/><circle cx="51.49" cy="14.47" r="0.5" opacity="0.74"/><circle cx="574.19" cy="24.39" r="0.4" opacity="0.46"/><circle cx="367.11" cy="89.16" r="0.8" opacity="0.52"/><circle cx="457.5" cy="100.21" r="0.45" opacity="0.4"/><circle cx="335.67" cy="50.23" r="0.8" opacity="0.38"/><circle cx="260.63" cy="26.02" r="0.4" opacity="0.33"/><circle cx="522.42" cy="76.77" r="0.45" opacity="0.28"/><circle cx="150.12" cy="33.8" r="0.6" opacity="0.37"/><circle cx="477.85" cy="86.48" r="0.35" opacity="0.3"/><circle cx="93" cy="6" r="2.4" filter="url(#soft)"/><circle cx="118" cy="20" r="2.2" filter="url(#soft)"/><circle cx="96" cy="37" r="2.2" filter="url(#soft)"/><circle cx="306" cy="84" r="2.6" filter="url(#soft)"/><circle cx="283" cy="50" r="1.8" filter="url(#soft)"/><circle cx="231" cy="114" r="1.8" filter="url(#soft)"/><circle cx="62" cy="128" r="2.2" filter="url(#soft)"/><circle cx="156" cy="127" r="2" filter="url(#soft)"/><circle cx="340" cy="24" r="1.6" filter="url(#soft)"/><circle cx="383" cy="43" r="1.6" filter="url(#soft)"/><circle cx="529" cy="46" r="1.6" filter="url(#soft)"/><circle cx="490" cy="5" r="1.6" filter="url(#soft)"/><circle cx="575" cy="22" r="1.4" filter="url(#soft)"/></g><text x="21.6" y="35.4" font-family='Liberation Sans,Noto Sans CJK TC,Noto Sans CJK SC,sans-serif' font-weight="300" font-size="26" fill="#2b3a4e" stroke="#2b3a4e" stroke-width=".25" textLength="319" lengthAdjust="spacing">彰化高商課外活動報名網站</text><polygon points="218.7,48.6 226,58.5 237.8,58.1 228.9,69.7 233.85,81.8 221,76.2 211.1,84.45 211.8,70.3 200.6,63.4 215.4,60.4" fill="#a9cdea" fill-opacity=".35" stroke="#2c4763" stroke-width="1.2" stroke-linejoin="round"/><polygon points="219.7,55.5 224.4,62.1 232.2,61.7 226.3,68.9 228.6,76.2 220.7,72.7 214.4,78.2 215,69.3 208.2,65 216.7,63.1" fill="#454b57" stroke="#454b57" stroke-width=".6" stroke-linejoin="round"/><g transform="translate(554.1 61.95) rotate(13)"><path d="M-14.3 0L-19.2 -24.2L-7.8 -12.2L-0.6 -29.4L8 -12.4L18.4 -25.2L14.3 0Z" fill="#454a55" stroke="#454a55" stroke-width="1" stroke-linejoin="round"/><circle cx="-19.2" cy="-24.6" r="1.5" fill="#454a55"/><circle cx="-0.6" cy="-29.8" r="1.5" fill="#454a55"/><circle cx="18.4" cy="-25.6" r="1.5" fill="#454a55"/></g><text x="257.2" y="111.2" font-family="Noto Sans CJK TC,Noto Sans CJK SC,sans-serif" font-size="54.4" textLength="324.5" lengthAdjust="spacing" font-weight="350" fill="#181e26" stroke="#c4dde1" stroke-width="4.9" stroke-linejoin="round" paint-order="stroke" filter="url(#sg)">年輕不要留白</text><circle cx="35.4" cy="112.6" r="21.4" fill="#f3f0ea"/><circle cx="36.1" cy="83.3" r="12.9" fill="#f6f3ee"/><path d="M27.57 59.48H44.63L43.84 73.58H28.36Z" fill="#3b4453"/><rect x="25.58" y="72.19" width="21.04" height="1.89" fill="#3b4453"/><circle cx="30.74" cy="79.13" r="1.14" fill="#3b4453"/><circle cx="39.67" cy="79.13" r="1.14" fill="#3b4453"/><path d="M33.92 80.72L46.02 81.71L34.31 84.49Z" fill="#f09a2a"/><path d="M29.75 84.89Q35.11 91.83 41.26 85.48" fill="none" stroke="#3b4453" stroke-width="1.09"/><path d="M21.61 90.84Q36.1 96.8 49.6 89.45L50.39 95.8Q36.1 103.34 20.62 97.19Z" fill="#ef5b60"/><path d="M26.18 94.81L6.33 106.12L9.9 112.28L31.14 100.76Z" fill="#ef5b60"/><path d="M28.16 97.79L15.86 116.64L21.81 120.61L33.52 100.76Z" fill="#e84a50"/><circle cx="35.4" cy="104.46" r="1.09" fill="#3b4453"/><circle cx="35.4" cy="110.32" r="1.09" fill="#3b4453"/><circle cx="35.4" cy="116.17" r="1.09" fill="#3b4453"/><circle cx="80.6" cy="119.1" r="16.4" fill="#f3f0ea"/><circle cx="81.3" cy="96.2" r="9.4" fill="#f6f3ee"/><path d="M75.08 78.85H87.52L86.94 89.11H75.66Z" fill="#3b4453"/><rect x="73.64" y="88.1" width="15.33" height="1.37" fill="#3b4453"/><circle cx="77.4" cy="93.16" r="0.83" fill="#3b4453"/><circle cx="83.9" cy="93.16" r="0.83" fill="#3b4453"/><path d="M79.71 94.32L88.53 95.04L80 97.07Z" fill="#f09a2a"/><path d="M76.67 97.36Q80.58 102.42 85.06 97.79" fill="none" stroke="#3b4453" stroke-width="0.8"/><path d="M70.74 101.7Q81.3 106.03 91.13 100.68L91.71 105.31Q81.3 110.81 70.02 106.32Z" fill="#ef5b60"/><path d="M74.07 104.59L59.61 112.83L62.21 117.31L77.68 108.93Z" fill="#ef5b60"/><path d="M75.52 106.76L66.55 120.5L70.89 123.39L79.42 108.93Z" fill="#e84a50"/><circle cx="80.6" cy="113.17" r="0.8" fill="#3b4453"/><circle cx="80.6" cy="117.44" r="0.8" fill="#3b4453"/><circle cx="80.6" cy="121.7" r="0.8" fill="#3b4453"/><circle cx="119.3" cy="121.9" r="11.2" fill="#f3f0ea"/><circle cx="120" cy="104.8" r="6.6" fill="#f6f3ee"/><path d="M115.63 92.62H124.37L123.96 99.82H116.04Z" fill="#3b4453"/><rect x="114.62" y="99.11" width="10.76" height="0.96" fill="#3b4453"/><circle cx="117.26" cy="102.67" r="0.58" fill="#3b4453"/><circle cx="121.83" cy="102.67" r="0.58" fill="#3b4453"/><path d="M118.88 103.48L125.08 103.99L119.09 105.41Z" fill="#f09a2a"/><path d="M116.75 105.61Q119.49 109.17 122.64 105.92" fill="none" stroke="#3b4453" stroke-width="0.56"/><path d="M112.59 108.66Q120 111.7 126.9 107.95L127.31 111.2Q120 115.06 112.08 111.91Z" fill="#ef5b60"/><path d="M114.92 110.69L104.77 116.48L106.6 119.62L117.46 113.74Z" fill="#ef5b60"/><path d="M115.94 112.21L109.64 121.86L112.69 123.89L118.68 113.74Z" fill="#e84a50"/><circle cx="119.3" cy="117.74" r="0.56" fill="#3b4453"/><circle cx="119.3" cy="120.73" r="0.56" fill="#3b4453"/><circle cx="119.3" cy="123.73" r="0.56" fill="#3b4453"/></svg>
<div class="a" style="left:0px;top:246.2px;width:87.2px;height:316.6px;background:#f6cefa"></div>
<div class="a" style="left:87.2px;top:246.2px;width:916px;height:316.6px;background:#76fafc"></div>
<div class="a" style="left:0px;top:97px;width:1003.2px;height:1px;background:repeating-linear-gradient(90deg,#fff 0 1px,transparent 1px 2px);opacity:.85"></div>
<div class="a" style="left:0px;top:246px;width:1003.2px;height:1px;background:repeating-linear-gradient(90deg,#fff 0 1px,transparent 1px 2px);opacity:.9"></div>
<div class="a" style="left:87px;top:246px;width:1px;height:316.8px;background:repeating-linear-gradient(#fff 0 1px,transparent 1px 2px);opacity:.9"></div>
<div class="a" style="left:88px;top:282px;width:915px;height:1px;background:repeating-linear-gradient(90deg,#fff 0 1px,transparent 1px 2px);opacity:.7"></div>
<div class="a" style="left:88px;top:291.6px;width:915px;height:1px;background:repeating-linear-gradient(90deg,#fff 0 1px,transparent 1px 2px);opacity:.7"></div>
<div class="a" style="left:1003.2px;top:96.8px;width:9px;height:466px;background:#f7f7ff"></div>
<div class="a" style="left:1006.4px;top:97px;width:1.2px;height:466px;background:repeating-linear-gradient(#8f9ad8 0 1px,transparent 1px 2px);opacity:.85"></div>
<div class="a" style="left:1003px;top:97px;width:1px;height:466px;background:repeating-linear-gradient(#c9cdf0 0 1px,transparent 1px 2px);opacity:.7"></div>
<div id="t34" class="t" style="left:90px;top:257.2px;font-size:11.7px;line-height:16px;height:16px;color:#1a1a1a;letter-spacing:0.01px;font-weight:500;font-family:'Liberation Serif','Noto Serif CJK TC','Noto Serif CJK SC',serif"><span style="color:#1a32e8;text-decoration:underline">根節點</span> &gt; <span style="color:#1a32e8;text-decoration:underline">父節點</span> &gt; 目前節點</div>
<div id="t35" class="t" style="right:1247.4px;top:260.4px;font-size:12.6px;line-height:16px;height:16px;color:#2b2b2b;font-weight:500;font-family:'Liberation Serif','Noto Serif CJK TC','Noto Serif CJK SC',serif">管理系統</div>
<div class="a" style="left:34.4px;top:258.2px;width:10.6px;height:10.6px;background:#f6f8f8;border:1px solid #6f9fc6"></div>
<svg style="left:37.6px;top:261px" width="4.6" height="5.4" viewBox="0 0 4.6 5.4"><path d="M0.8 0.5L3.4 2.7L0.8 4.9" fill="none" stroke="#3b6873" stroke-width="1.1"/></svg>
<div id="t36" class="t" style="right:1266.1px;top:290.3px;font-size:12.2px;line-height:16px;height:16px;color:#1d1de6;font-weight:500;font-family:'Liberation Serif','Noto Serif CJK TC','Noto Serif CJK SC',serif">活動</div>
<div id="t37" class="t" style="right:1266.1px;top:305.3px;font-size:12.2px;line-height:16px;height:16px;color:#1d1de6;font-weight:500;font-family:'Liberation Serif','Noto Serif CJK TC','Noto Serif CJK SC',serif">紀錄</div>
<div id="t38" class="t" style="right:1266.1px;top:334.9px;font-size:12.2px;line-height:16px;height:16px;color:#1d1de6;font-weight:500;font-family:'Liberation Serif','Noto Serif CJK TC','Noto Serif CJK SC',serif">活動</div>
<div id="t39" class="t" style="right:1266.1px;top:349.7px;font-size:12.2px;line-height:16px;height:16px;color:#1d1de6;font-weight:500;font-family:'Liberation Serif','Noto Serif CJK TC','Noto Serif CJK SC',serif">管理</div>
<div id="t40" class="t" style="right:1266.1px;top:364.3px;font-size:12.2px;line-height:16px;height:16px;color:#1d1de6;font-weight:500;font-family:'Liberation Serif','Noto Serif CJK TC','Noto Serif CJK SC',serif">名單</div>
<div class="a" style="left:34.3px;top:317px;width:5.2px;height:5.2px;background:#fff;border:1px solid #222;border-radius:1.2px"></div>
<div class="a" style="left:34.3px;top:380.8px;width:5.2px;height:5.2px;background:#fff;border:1px solid #222;border-radius:1.2px"></div>
<div class="a" style="left:-2px;top:393px;width:88.4px;height:20.8px;background:#efefef;border:1px solid #b9b9b9"></div>
<div id="t41" class="t" style="right:1277.4px;top:395.4px;font-size:8.6px;color:#111;font-family:'Liberation Serif','Noto Serif CJK TC','Noto Serif CJK SC',serif"><b>e</b></div>
<div id="t42" class="t" style="left:5.5px;top:395.4px;font-size:8.6px;color:#222;letter-spacing:-0.1px;font-family:'Liberation Serif','Noto Serif CJK TC','Noto Serif CJK SC',serif">- SiteMapDataSource1</div>
<div class="a" style="left:1012.2px;top:96.4px;width:12.6px;height:466.4px;background:#3e3e42"></div>
<svg style="left:1014.8px;top:102px" width="6.6" height="3.4" viewBox="0 0 6.6 3.4"><path d="M0 3.4L3.3 0L6.6 3.4Z" fill="#999"/></svg>
<div class="a" style="left:1014.9px;top:115.4px;width:6.4px;height:262.2px;background:#666"></div>
<svg style="left:1014.6px;top:554.4px" width="7" height="4" viewBox="0 0 7 4"><path d="M0 0H7L3.5 4Z" fill="#999"/></svg>
<div class="a" style="left:0px;top:562.8px;width:1024.6px;height:12.6px;background:#3e3e42"></div>
<svg style="left:1003.4px;top:565.4px" width="4" height="7" viewBox="0 0 4 7"><path d="M0 0L4 3.5L0 7Z" fill="#5a5a5e"/></svg>
<div class="a" style="left:0px;top:591.8px;width:1256.6px;height:5.8px;background:#3e3e42"></div>
<div class="a" style="left:1024.8px;top:82px;width:5px;height:509.8px;background:#313135"></div>
<div class="a" style="left:0px;top:575.4px;width:1024.6px;height:16.4px;background:#252526"></div>
<svg style="left:3.2px;top:580.2px" width="7.8" height="5" viewBox="0 0 7.8 5"><circle cx="2.3" cy="2.5" r="1.7" fill="none" stroke="#f1f1f1" stroke-width="1.3"/><circle cx="5.5" cy="2.5" r="1.7" fill="none" stroke="#f1f1f1" stroke-width="1.3"/></svg>
<div id="t43" class="t" style="left:14.8px;top:576.8px;color:#f1f1f1;letter-spacing:-0.07px">原始檔</div>
<div class="a" style="left:49.4px;top:578.4px;width:1.4px;height:8.6px;background:#e8e8e8"></div>
<div class="a" style="left:66.6px;top:577px;width:7.8px;height:13px;background:#2d2d30;border:1px solid #555"></div>
<svg style="left:69px;top:581.4px" width="3" height="4.4" viewBox="0 0 3 4.4"><path d="M3 0L0 2.2L3 4.4Z" fill="#777"/></svg>
<div class="a" style="left:74.8px;top:577px;width:2.6px;height:13px;background:#f4f4f4"></div>
<div class="a" style="left:77.4px;top:577px;width:28.6px;height:13px;border:1px solid #4a4a4e"></div>
<div id="t44" class="t" style="left:80px;top:577px;font-size:8.2px;color:#ececec;letter-spacing:-0.16px;font-family:'Liberation Serif','Noto Serif CJK TC','Noto Serif CJK SC',serif">&lt;html&gt;</div>
<div class="a" style="left:106.6px;top:577px;width:2.6px;height:13px;background:#f4f4f4"></div>
<div class="a" style="left:109.2px;top:577px;width:30.2px;height:13px;border:1px solid #4a4a4e"></div>
<div id="t45" class="t" style="left:111.4px;top:577px;font-size:8.2px;color:#ececec;letter-spacing:0.1px;font-family:'Liberation Serif','Noto Serif CJK TC','Noto Serif CJK SC',serif">&lt;body&gt;</div>
<div class="a" style="left:139.6px;top:577px;width:2.6px;height:13px;background:#f4f4f4"></div>
<div class="a" style="left:142.2px;top:577px;width:56px;height:13px;background:#2d2d30"></div>
<div id="t46" class="t" style="left:144.9px;top:577px;font-size:8.2px;color:#ececec;letter-spacing:0.16px;font-family:'Liberation Serif','Noto Serif CJK TC','Noto Serif CJK SC',serif">&lt;form#form1&gt;</div>
<div class="a" style="left:1006px;top:576.8px;width:2.6px;height:13.4px;background:#f4f4f4"></div>
<div class="a" style="left:1008.6px;top:576.8px;width:8.6px;height:13.4px;background:#2d2d30;border:1px solid #666"></div>
<svg style="left:1011.6px;top:581.4px" width="3" height="4.4" viewBox="0 0 3 4.4"><path d="M0 0L3 2.2L0 4.4Z" fill="#999"/></svg>
<div class="a" style="left:1029.8px;top:82.4px;width:226.8px;height:509.2px;background:#252526;border:1px solid #3a3a3e"></div>
<div class="a" style="left:1030.8px;top:83.2px;width:224.8px;height:33.4px;background:#2d2d30"></div>
<div id="t47" class="t" style="left:1033.8px;top:84.2px;color:#d4d4d4;letter-spacing:-0.05px">診斷工具</div>
<svg style="left:1223.2px;top:88.95px" width="5.6" height="3.3" viewBox="0 0 5.6 3.3"><path d="M0 0H5.6L2.8 3.3Z" fill="#e6e6e6"/></svg>
<svg style="left:1233.4px;top:86.4px" width="5.6" height="8.4" viewBox="0 0 5.6 8.4"><path d="M1.2 0.5H4.4V4.6H1.2Z M0 4.9H5.6 M2.8 5V8.4" fill="none" stroke="#e6e6e6" stroke-width="1"/><path d="M3.6 0.5V4.6" stroke="#e6e6e6" stroke-width="1"/></svg>
<svg style="left:1245px;top:87.2px" width="6.4" height="6.4" viewBox="0 0 6.4 6.4"><path d="M0.4 0.4L6 6M6 0.4L0.4 6" stroke="#e6e6e6" stroke-width="1.3"/></svg>
<svg style="left:1037.4px;top:101px" width="12.6" height="12.6" viewBox="0 0 12.6 12.6"><path d="M10.18 7.91L11.94 8.63" stroke="#dcdcdc" stroke-width="2.3"/><path d="M10.27 7.95L11.29 8.37" stroke="#2d2d30" stroke-width=".7"/><path d="M7.91 10.18L8.63 11.94" stroke="#dcdcdc" stroke-width="2.3"/><path d="M7.95 10.27L8.37 11.29" stroke="#2d2d30" stroke-width=".7"/><path d="M4.69 10.18L3.97 11.94" stroke="#dcdcdc" stroke-width="2.3"/><path d="M4.65 10.27L4.23 11.29" stroke="#2d2d30" stroke-width=".7"/><path d="M2.42 7.91L0.66 8.63" stroke="#dcdcdc" stroke-width="2.3"/><path d="M2.33 7.95L1.31 8.37" stroke="#2d2d30" stroke-width=".7"/><path d="M2.42 4.69L0.66 3.97" stroke="#dcdcdc" stroke-width="2.3"/><path d="M2.33 4.65L1.31 4.23" stroke="#2d2d30" stroke-width=".7"/><path d="M4.69 2.42L3.97 0.66" stroke="#dcdcdc" stroke-width="2.3"/><path d="M4.65 2.33L4.23 1.31" stroke="#2d2d30" stroke-width=".7"/><path d="M7.91 2.42L8.63 0.66" stroke="#dcdcdc" stroke-width="2.3"/><path d="M7.95 2.33L8.37 1.31" stroke="#2d2d30" stroke-width=".7"/><path d="M10.18 4.69L11.94 3.97" stroke="#dcdcdc" stroke-width="2.3"/><path d="M10.27 4.65L11.29 4.23" stroke="#2d2d30" stroke-width=".7"/><circle cx="6.3" cy="6.3" r="3.9" fill="#2d2d30" stroke="#dcdcdc" stroke-width="1"/><circle cx="6.3" cy="6.3" r="1.15" fill="none" stroke="#dcdcdc" stroke-width=".9"/></svg>
<div class="a" style="left:1057.6px;top:99.6px;width:1px;height:15px;background:#39393d"></div>
<svg style="left:1063px;top:101.9px" width="11" height="11" viewBox="0 0 11 11"><path d="M6.6 6.6L10.2 9.9" stroke="#cfcfcf" stroke-width="2.3" stroke-linecap="round"/><path d="M6.9 6.9L10 9.8" stroke="#55585c" stroke-width=".7" stroke-linecap="round"/><circle cx="4" cy="4" r="3.3" fill="#c6d6e6" stroke="#d8d8d8" stroke-width="1.1"/><path d="M2.3 4H5.7M4 2.3V5.7" stroke="#3e5f80" stroke-width="1"/></svg>
<svg style="left:1082px;top:102.5px" width="11" height="11" viewBox="0 0 11 11"><path d="M6.6 6.6L10.2 9.9" stroke="#cfcfcf" stroke-width="2.3" stroke-linecap="round"/><path d="M6.9 6.9L10 9.8" stroke="#55585c" stroke-width=".7" stroke-linecap="round"/><circle cx="4" cy="4" r="3.3" fill="#c6d6e6" stroke="#d8d8d8" stroke-width="1.1"/><path d="M2.3 4H5.7" stroke="#3e5f80" stroke-width="1"/></svg>
<svg style="left:1100.2px;top:101.4px" width="11" height="12.4" viewBox="0 0 11 12.4"><circle cx="1.6" cy="1.6" r="1.1" fill="none" stroke="#d8d8d8" stroke-width=".9"/><circle cx="4.2" cy="3.6" r="1.1" fill="none" stroke="#d8d8d8" stroke-width=".9"/><path d="M4.4 0.6L1.4 4.6" stroke="#d8d8d8" stroke-width=".8"/><path d="M1 6H3.4V11.6H1Z M4.4 4.6H6.8V11.6H4.4Z M7.8 7H10.2V11.6H7.8Z" fill="#55585c" stroke="#e2e2e2" stroke-width="1"/><path d="M0.4 11.8H10.8" stroke="#e2e2e2" stroke-width="1.2"/></svg>
<div id="t48" class="t" style="left:1038.3px;top:117px;color:#f1f1f1;font-weight:bold;letter-spacing:0.11px">診斷工作階段: 2:13 分鐘</div>
<div class="a" style="left:1030.8px;top:131.2px;width:224.8px;height:1px;background:#3f3f46"></div>
<div class="a" style="left:1030.8px;top:148.2px;width:224.8px;height:1px;background:#3f3f46"></div>
<div class="a" style="left:1030.8px;top:132.2px;width:224.8px;height:16px;background:#1f1f20"></div>
<div class="a" style="left:1054.6px;top:132.4px;width:3px;height:15.8px;background:#f4f4f4"></div>
<div class="a" style="left:1229.4px;top:132.4px;width:3px;height:15.8px;background:#f4f4f4"></div>
<div class="a" style="left:1096.2px;top:132.2px;width:1px;height:16px;background:#4a4a4e"></div>
<div class="a" style="left:1189.6px;top:132.2px;width:1px;height:16px;background:#4a4a4e"></div>
<div class="a" style="left:1076.7px;top:146px;width:1px;height:2.2px;background:#5a5a5e"></div>
<div class="a" style="left:1114.1px;top:146px;width:1px;height:2.2px;background:#5a5a5e"></div>
<div class="a" style="left:1132.8px;top:146px;width:1px;height:2.2px;background:#5a5a5e"></div>
<div class="a" style="left:1151.5px;top:146px;width:1px;height:2.2px;background:#5a5a5e"></div>
<div class="a" style="left:1170.2px;top:146px;width:1px;height:2.2px;background:#5a5a5e"></div>
<div class="a" style="left:1207.6px;top:146px;width:1px;height:2.2px;background:#5a5a5e"></div>
<div class="a" style="left:1226.3px;top:146px;width:1px;height:2.2px;background:#5a5a5e"></div>
<div id="t49" class="t" style="left:1098px;top:130.6px;color:#cfcfcf;letter-spacing:0.05px">2:00分鐘</div>
<div id="t50" class="t" style="left:1191.4px;top:130.6px;color:#cfcfcf;letter-spacing:0.05px">2:10分鐘</div>
<svg style="left:1035px;top:153.1px" width="5" height="5.2" viewBox="0 0 5 5.2"><path d="M5 0V5.2H0Z" fill="#9a9a9a"/></svg>
<div id="t51" class="t" style="left:1042.7px;top:148.7px;color:#f1f1f1;font-weight:bold;letter-spacing:-0.15px">事件</div>
<svg style="left:1043.4px;top:166.2px" width="7.6" height="7.8" viewBox="0 0 7.6 7.8"><path d="M0.6 0.6H7V7.2H0.6Z M3.8 0.6V7.2" fill="none" stroke="#e4e4e4" stroke-width="1.2"/></svg>
<div class="a" style="left:1057.2px;top:162.4px;width:172.2px;height:16.2px;background:#222223;border:1px solid #3f3f42"></div>
<svg style="left:1035px;top:183.6px" width="5" height="5.2" viewBox="0 0 5 5.2"><path d="M5 0V5.2H0Z" fill="#9a9a9a"/></svg>
<div id="t52" class="t" style="left:1042.7px;top:179.2px;color:#f1f1f1;font-weight:bold;letter-spacing:0.23px">處理序記憶體 (MB)</div>
<svg style="left:1185.4px;top:181.4px" width="5.4" height="8.2" viewBox="0 0 5.4 8.2"><path d="M0.3 0.3H5.1V4.4L2.7 8L0.3 4.4Z" fill="#f3c24c"/></svg>
<svg style="left:1201.4px;top:181.8px" width="8.8" height="6.8" viewBox="0 0 8.8 6.8"><path d="M0 0H8.8L4.4 6.8Z" fill="#2f9af3"/></svg>
<svg style="left:1219px;top:181px" width="9" height="9" viewBox="0 0 9 9"><circle cx="4.5" cy="4.5" r="4.3" fill="#7eb6d4"/></svg>
<div class="a" style="left:1057.2px;top:192.2px;width:172.2px;height:51.4px;background:#222223;border:1px solid #3f3f42"></div>
<div class="a" style="left:1058px;top:196.9px;width:161.2px;height:46px;background:#5c8299"></div>
<div id="t53" class="t" style="left:1043.4px;top:190.9px;font-size:9px;color:#ececec;letter-spacing:-0.21px">90</div>
<div id="t54" class="t" style="left:1048.4px;top:232.5px;font-size:9px;color:#ececec">0</div>
<div id="t55" class="t" style="left:1233.3px;top:190.9px;font-size:9px;color:#ececec;letter-spacing:-0.21px">90</div>
<div id="t56" class="t" style="left:1233.3px;top:232.5px;font-size:9px;color:#ececec">0</div>
<svg style="left:1035px;top:248.1px" width="5" height="5.2" viewBox="0 0 5 5.2"><path d="M5 0V5.2H0Z" fill="#9a9a9a"/></svg>
<div id="t57" class="t" style="left:1042.7px;top:243.7px;color:#f1f1f1;font-weight:bold;letter-spacing:0.23px">CPU (所有處理器的 %)</div>
<div class="a" style="left:1057.2px;top:257.2px;width:172.2px;height:51.4px;background:#222223;border:1px solid #3f3f42"></div>
<div id="t58" class="t" style="left:1039.3px;top:256px;font-size:9px;color:#ececec;letter-spacing:-0.34px">100</div>
<div id="t59" class="t" style="left:1048.4px;top:297.6px;font-size:9px;color:#ececec">0</div>
<div id="t60" class="t" style="left:1233.6px;top:256px;font-size:9px;color:#ececec;letter-spacing:-0.34px">100</div>
<div id="t61" class="t" style="left:1233.3px;top:297.6px;font-size:9px;color:#ececec">0</div>
<div class="a" style="left:1096.2px;top:163.2px;width:1px;height:14.6px;background:#333336"></div>
<div class="a" style="left:1096.2px;top:193px;width:1px;height:49.8px;background:#333336;mix-blend-mode:lighten;opacity:.5"></div>
<div class="a" style="left:1096.2px;top:258px;width:1px;height:49.8px;background:#333336"></div>
<div class="a" style="left:1189.6px;top:163.2px;width:1px;height:14.6px;background:#333336"></div>
<div class="a" style="left:1189.6px;top:193px;width:1px;height:49.8px;background:#333336;mix-blend-mode:lighten;opacity:.5"></div>
<div class="a" style="left:1189.6px;top:258px;width:1px;height:49.8px;background:#333336"></div>
<div class="a" style="left:1030.8px;top:322.6px;width:224.8px;height:2px;background:#434348"></div>
<div class="a" style="left:1033.2px;top:327px;width:26.4px;height:15.6px;background:#3f3f46"></div>
<div id="t62" class="t" style="left:1037.9px;top:328.8px;color:#f1f1f1;letter-spacing:0px">摘要</div>
<div id="t63" class="t" style="left:1064.7px;top:328.8px;color:#f1f1f1;letter-spacing:-0.1px">事件</div>
<div id="t64" class="t" style="left:1091.5px;top:328.8px;color:#f1f1f1;letter-spacing:0px">記憶體使用量</div>
<div id="t65" class="t" style="left:1153.7px;top:328.8px;color:#f1f1f1;letter-spacing:-0.27px">CPU 使用量</div>
<div class="a" style="left:1030.8px;top:343.2px;width:224.8px;height:1px;background:#3d3d42"></div>
<div class="a" style="left:1030.8px;top:361.4px;width:224.8px;height:1px;background:#3d3d42"></div>
<div class="a" style="left:1030.8px;top:381px;width:224.8px;height:1px;background:#3d3d42"></div>
<div class="a" style="left:1030.8px;top:398.4px;width:224.8px;height:1px;background:#3d3d42"></div>
<div class="a" style="left:1030.8px;top:418.2px;width:224.8px;height:1px;background:#3d3d42"></div>
<div class="a" style="left:1030.8px;top:435.4px;width:224.8px;height:1px;background:#3d3d42"></div>
<div id="t66" class="t" style="left:1037.3px;top:346.3px;color:#f1f1f1;font-weight:bold;letter-spacing:-0.4px">事件</div>
<svg style="left:1041.3px;top:368.6px" width="9.8" height="4.6" viewBox="0 0 9.8 4.6"><ellipse cx="2.6" cy="2.3" rx="2" ry="1.7" fill="none" stroke="#d8d8d8" stroke-width="1.2"/><ellipse cx="7.2" cy="2.3" rx="2" ry="1.7" fill="none" stroke="#d8d8d8" stroke-width="1.2"/><path d="M3.4 2.3H6.4" stroke="#d8d8d8" stroke-width="1.4"/></svg>
<div id="t67" class="t" style="left:1056.6px;top:365px;color:#f1f1f1;letter-spacing:0.11px">顯示事件 (0/0)</div>
<div id="t68" class="t" style="left:1037.3px;top:383.2px;color:#f1f1f1;font-weight:bold;letter-spacing:0.1px">記憶體使用量</div>
<svg style="left:1041.3px;top:403px" width="10.4" height="8.8" viewBox="0 0 10.4 8.8"><path d="M0.6 2H3L3.8 0.6H6.6L7.4 2H9.8V8.2H0.6Z" fill="none" stroke="#d8d8d8" stroke-width="1.1"/><circle cx="5.2" cy="5" r="1.7" fill="none" stroke="#d8d8d8" stroke-width="1.1"/></svg>
<div id="t69" class="t" style="left:1056.6px;top:401.5px;color:#f1f1f1;letter-spacing:-0.07px">擷取快照</div>
<div id="t70" class="t" style="left:1037.3px;top:420.8px;color:#f1f1f1;font-weight:bold;letter-spacing:-0.1px">CPU 使用量</div>
<svg style="left:1042.3px;top:440px" width="8.4" height="8.4" viewBox="0 0 8.4 8.4"><circle cx="4.2" cy="4.2" r="3.3" fill="#444" stroke="#7c7c7c" stroke-width="1.3"/></svg>
<div class="a" style="left:1056.6px;top:437px;width:190px;height:14px;overflow:hidden"><div id="t71" class="t"  style="left:0px;top:1px;color:#66666a">這個版本的 Windows 無法在偵錯時進行 CPU 分析</div>
</div>
<div class="a" style="left:1266.8px;top:82.2px;width:0;height:0;transform:rotate(90deg);transform-origin:0 0"><div class="t" style="left:0;top:-6px;color:#d0d0d0;letter-spacing:-0.2px">方案總管</div></div>
<div class="a" style="left:1275.4px;top:82.4px;width:4.6px;height:35.4px;background:#3c3c41"></div>
<div class="a" style="left:1275.4px;top:126.4px;width:4.6px;height:54.8px;background:#3c3c41"></div>
<div class="a" style="left:1266.8px;top:127.2px;width:0;height:0;transform:rotate(90deg);transform-origin:0 0"><div class="t" style="left:0;top:-6px;color:#d0d0d0;letter-spacing:-0.1px">Team Explorer</div></div>
<div class="a" style="left:0px;top:597.6px;width:578.6px;height:144.8px;background:#272729"></div>
<div class="a" style="left:0px;top:597.6px;width:578.6px;height:15px;background:#007acc"></div>
<div class="a" style="left:0px;top:602.4px;width:540px;height:5px;background-image:radial-gradient(circle,#59a8dd .5px,transparent .7px);background-size:2.5px 2.5px;opacity:.9"></div>
<svg style="left:545.6px;top:603.75px" width="5.6" height="3.3" viewBox="0 0 5.6 3.3"><path d="M0 0H5.6L2.8 3.3Z" fill="#fff"/></svg>
<svg style="left:556.2px;top:600.8px" width="5.6" height="8.4" viewBox="0 0 5.6 8.4"><path d="M1.2 0.5H4.4V4.6H1.2Z M0 4.9H5.6 M2.8 5V8.4" fill="none" stroke="#fff" stroke-width="1"/><path d="M3.6 0.5V4.6" stroke="#fff" stroke-width="1"/></svg>
<svg style="left:567.2px;top:601.8px" width="6.6" height="6.6" viewBox="0 0 6.6 6.6"><path d="M0.4 0.4L6.2 6.2M6.2 0.4L0.4 6.2" stroke="#fff" stroke-width="1.4"/></svg>
<div id="t72" class="t" style="left:126.8px;top:612.6px;font-size:8.4px;color:#6a6a6e">值</div>
<div id="t73" class="t" style="left:533.4px;top:612.2px;font-size:8.4px;color:#6a6a6e;letter-spacing:0.42px">類型</div>
<div class="a" style="left:566.4px;top:612.6px;width:12.2px;height:111.6px;background:#333337"></div>
<svg style="left:569px;top:618px" width="7" height="4" viewBox="0 0 7 4"><path d="M0 4L3.5 0L7 4Z" fill="#4f4f54"/></svg>
<svg style="left:569px;top:714.6px" width="7" height="4" viewBox="0 0 7 4"><path d="M0 0H7L3.5 4Z" fill="#4f4f54"/></svg>
<div class="a" style="left:0px;top:724.2px;width:578.6px;height:18.2px;background:#2d2d30"></div>
<div id="t74" class="t" style="left:4.3px;top:726.3px;color:#d0d0d0;letter-spacing:-0.15px">監看式 1</div>
<div class="a" style="left:578.6px;top:597.6px;width:5.8px;height:126.4px;background:#303034"></div>
<div class="a" style="left:584.3px;top:597.6px;width:672.1px;height:126.4px;background:#252526"></div>
<div class="a" style="left:584.3px;top:597.6px;width:672.1px;height:34.8px;background:#2d2d30"></div>
<div id="t75" class="t" style="left:588px;top:599.3px;color:#c8c8c8;letter-spacing:0.05px">錯誤清單</div>
<div class="a" style="left:628px;top:602.4px;width:590px;height:5px;background-image:radial-gradient(circle,#55555a .5px,transparent .7px);background-size:2.5px 2.5px;opacity:.55"></div>
<svg style="left:1222.8px;top:603.75px" width="5.6" height="3.3" viewBox="0 0 5.6 3.3"><path d="M0 0H5.6L2.8 3.3Z" fill="#e6e6e6"/></svg>
<svg style="left:1233.8px;top:600.8px" width="5.6" height="8.4" viewBox="0 0 5.6 8.4"><path d="M1.2 0.5H4.4V4.6H1.2Z M0 4.9H5.6 M2.8 5V8.4" fill="none" stroke="#e6e6e6" stroke-width="1"/><path d="M3.6 0.5V4.6" stroke="#e6e6e6" stroke-width="1"/></svg>
<svg style="left:1244.6px;top:601.6px" width="6.6" height="6.6" viewBox="0 0 6.6 6.6"><path d="M0.4 0.4L6.2 6.2M6.2 0.4L0.4 6.2" stroke="#e6e6e6" stroke-width="1.4"/></svg>
<div class="a" style="left:590.4px;top:615.4px;width:110.2px;height:14.6px;background:#333337;border:1px solid #3f3f46"></div>
<div id="t76" class="t" style="left:592.8px;top:616.8px;color:#f1f1f1;letter-spacing:0.25px">整個方案</div>
<svg style="left:693.8px;top:621.65px" width="4.4" height="2.7" viewBox="0 0 4.4 2.7"><path d="M0 0H4.4L2.2 2.7Z" fill="#999"/></svg>
<div class="a" style="left:709.3px;top:614px;width:47.8px;height:16.8px;background:#2d2d30;border:1px solid #3a78b5"></div>
<svg style="left:711.6px;top:616.4px" width="12" height="12" viewBox="0 0 12 12"><circle cx="6" cy="6" r="5.5" fill="#dc3237" stroke="#f4dcdc" stroke-width="1.1"/><path d="M3.7 3.7L8.3 8.3M8.3 3.7L3.7 8.3" stroke="#fff" stroke-width="1.7"/></svg>
<div id="t77" class="t" style="left:726.6px;top:616.6px;color:#f1f1f1;letter-spacing:-0.14px">2 錯誤</div>
<div class="a" style="left:762px;top:614px;width:48.3px;height:16.8px;background:#2d2d30;border:1px solid #3a78b5"></div>
<svg style="left:764.6px;top:616.6px" width="12.4" height="11.4" viewBox="0 0 12.4 11.4"><path d="M6.2 0.8L11.8 10.6H0.6Z" fill="#f6cf3e" stroke="#f6cf3e" stroke-width="1" stroke-linejoin="round"/><path d="M6.2 3.8V7.4" stroke="#1e1e1e" stroke-width="1.5"/><circle cx="6.2" cy="9" r=".85" fill="#1e1e1e"/></svg>
<div id="t78" class="t" style="left:780px;top:616.6px;color:#f1f1f1;letter-spacing:-0.23px">3 警告</div>
<svg style="left:818.4px;top:616.4px" width="12" height="12" viewBox="0 0 12 12"><circle cx="6" cy="6" r="5.3" fill="#1e9ae0" stroke="#d8eefb" stroke-width="1"/><path d="M6 5.2V9" stroke="#fff" stroke-width="1.6"/><circle cx="6" cy="3.3" r=".95" fill="#fff"/></svg>
<div id="t79" class="t" style="left:833px;top:616.6px;color:#f1f1f1;letter-spacing:-0.11px">0 訊息</div>
<div class="a" style="left:869px;top:614px;width:16.8px;height:16.6px;background:#2d2d30;border:1px solid #3a78b5"></div>
<svg style="left:872px;top:617px" width="11" height="11" viewBox="0 0 11 11"><path d="M4.4 4.4H10.6L8.4 7.2V10.6L6.6 9.4V7.2Z" fill="#d8d8d8"/><path d="M0.4 0.6L4.4 4.4M4.4 0.6L0.4 4.4" stroke="#e8524f" stroke-width="1.5"/></svg>
<div class="a" style="left:894px;top:615.4px;width:110.6px;height:14.6px;background:#333337;border:1px solid #3f3f46"></div>
<div id="t80" class="t" style="left:897px;top:616.8px;color:#f1f1f1;letter-spacing:-0.11px">組建 + IntelliSense</div>
<svg style="left:997.8px;top:621.65px" width="4.4" height="2.7" viewBox="0 0 4.4 2.7"><path d="M0 0H4.4L2.2 2.7Z" fill="#999"/></svg>
<div class="a" style="left:1108.4px;top:615px;width:147.4px;height:14.4px;background:#333337;border:1px solid #3f3f46"></div>
<div id="t81" class="t" style="left:1112.4px;top:616.6px;color:#8f8f8f;letter-spacing:-0.03px">搜尋錯誤清單</div>
<svg style="left:1235.5px;top:617.2px" width="10.6" height="10.6" viewBox="0 0 10.6 10.6"><circle cx="6.6" cy="3.8" r="2.8" fill="none" stroke="#f1f1f1" stroke-width="1.6"/><path d="M4.6 5.9L0.9 9.6" stroke="#f1f1f1" stroke-width="2" stroke-linecap="square"/></svg>
<svg style="left:1248.8px;top:621.25px" width="4.4" height="2.7" viewBox="0 0 4.4 2.7"><path d="M0 0H4.4L2.2 2.7Z" fill="#d0d0d0"/></svg>
<div class="a" style="left:584.3px;top:632.4px;width:655.7px;height:14.4px;background:#252526"></div>
<div class="a" style="left:606.3px;top:632.4px;width:633.7px;height:14.4px;background:#1f1f20"></div>
<div class="a" style="left:606.3px;top:633px;width:1px;height:13.4px;background:#3a3a3e"></div>
<div class="a" style="left:624px;top:633px;width:1px;height:13.4px;background:#3a3a3e"></div>
<div class="a" style="left:661.4px;top:633px;width:1px;height:13.4px;background:#3a3a3e"></div>
<div class="a" style="left:899.4px;top:633px;width:1px;height:13.4px;background:#3a3a3e"></div>
<div class="a" style="left:1011.6px;top:633px;width:1px;height:13.4px;background:#3a3a3e"></div>
<div class="a" style="left:1122.3px;top:633px;width:1px;height:13.4px;background:#3a3a3e"></div>
<div class="a" style="left:1148px;top:633px;width:1px;height:13.4px;background:#3a3a3e"></div>
<svg style="left:617.6px;top:635px" width="4" height="4" viewBox="0 0 4 4"><path d="M0 0H4V4" fill="none" stroke="#8a8a8a" stroke-width="1"/></svg>
<div id="t82" class="t" style="left:627px;top:633.6px;color:#e2e2e2;letter-spacing:0.07px">程式碼</div>
<div id="t83" class="t" style="left:664.2px;top:633.6px;color:#e2e2e2;letter-spacing:-0.05px">說明</div>
<div id="t84" class="t" style="left:902.7px;top:633.6px;color:#e2e2e2;letter-spacing:-0.05px">專案</div>
<div id="t85" class="t" style="left:1014px;top:633.6px;color:#e2e2e2;letter-spacing:0.2px">檔案</div>
<div id="t86" class="t" style="left:1125.3px;top:633.6px;color:#e2e2e2">行</div>
<div id="t87" class="t" style="left:1151px;top:633.6px;color:#e2e2e2;letter-spacing:0.2px">隱藏項目狀態</div>
<svg style="left:1222.6px;top:634.4px" width="11.6" height="10.4" viewBox="0 0 11.6 10.4"><path d="M0.6 0.6H11L7 5.2V9.8H4.6V5.2Z" fill="none" stroke="#e0e0e0" stroke-width="1.1"/></svg>
<div class="a" style="left:584.3px;top:647.2px;width:659.3px;height:14px;background:#3a3a3e"></div>
<svg style="left:607.6px;top:648.2px" width="12.4" height="12" viewBox="0 0 12.4 12"><circle cx="6" cy="6" r="5.5" fill="#dc3237" stroke="#f4dcdc" stroke-width="1.1"/><path d="M3.7 3.7L8.3 8.3M8.3 3.7L3.7 8.3" stroke="#fff" stroke-width="1.7"/></svg>
<div id="t88" class="t" style="left:624.6px;top:648.2px;color:#2b8fe8;letter-spacing:-0.57px;text-decoration:underline">BC30456</div>
<div id="t89" class="t" style="left:661.8px;top:648.2px;color:#e9e9e9;letter-spacing:0.07px">'text' is not a member of 'ContentPlaceHolder'.</div>
<div id="t90" class="t" style="left:900px;top:648.2px;color:#e9e9e9;letter-spacing:-0.34px">dp105108W2</div>
<div id="t91" class="t" style="left:1011.2px;top:648.2px;color:#e9e9e9;letter-spacing:-0.1px">MasterPage.master.vb</div>
<div id="t92" class="t" style="left:1122.3px;top:648.2px;color:#e9e9e9">7</div>
<div id="t93" class="t" style="left:1148.3px;top:648.2px;color:#e9e9e9;letter-spacing:-0.07px">使用中</div>
<svg style="left:607.6px;top:663px" width="12.4" height="12" viewBox="0 0 12.4 12"><circle cx="6" cy="6" r="5.5" fill="#dc3237" stroke="#f4dcdc" stroke-width="1.1"/><path d="M3.7 3.7L8.3 8.3M8.3 3.7L3.7 8.3" stroke="#fff" stroke-width="1.7"/></svg>
<div id="t94" class="t" style="left:624.6px;top:663px;color:#2b8fe8;letter-spacing:-0.57px">BC30456</div>
<div id="t95" class="t" style="left:661.8px;top:663px;color:#e9e9e9;letter-spacing:0.07px">'text' is not a member of 'ContentPlaceHolder'.</div>
<div id="t96" class="t" style="left:900px;top:663px;color:#e9e9e9;letter-spacing:-0.34px">dp105108W2</div>
<div id="t97" class="t" style="left:1011.2px;top:663px;color:#e9e9e9;letter-spacing:-0.1px">MasterPage.master.vb</div>
<div id="t98" class="t" style="left:1122.3px;top:663px;color:#e9e9e9">9</div>
<div id="t99" class="t" style="left:1148.3px;top:663px;color:#e9e9e9;letter-spacing:-0.07px">使用中</div>
<svg style="left:607.6px;top:678.2px" width="12.4" height="12" viewBox="0 0 12.4 12"><path d="M6.2 0.8L11.8 10.6H0.6Z" fill="#f6cf3e" stroke="#f6cf3e" stroke-width="1" stroke-linejoin="round"/><path d="M6.2 3.8V7.4" stroke="#1e1e1e" stroke-width="1.5"/><circle cx="6.2" cy="9" r=".85" fill="#1e1e1e"/></svg>
<div id="t100" class="t" style="left:661.8px;top:678.2px;color:#e9e9e9;letter-spacing:-0.02px">在目前的主版頁面中找不到 'ContentPlaceHolder1'。</div>
<div id="t101" class="t" style="left:900px;top:678.2px;color:#e9e9e9;letter-spacing:-0.34px">dp105108W2</div>
<div id="t102" class="t" style="left:1011.2px;top:678.2px;color:#e9e9e9;letter-spacing:-0.03px">Act_mgr.aspx</div>
<div id="t103" class="t" style="left:1122.3px;top:678.2px;color:#e9e9e9">5</div>
<svg style="left:607.6px;top:697.2px" width="12.4" height="12" viewBox="0 0 12.4 12"><path d="M6.2 0.8L11.8 10.6H0.6Z" fill="#f6cf3e" stroke="#f6cf3e" stroke-width="1" stroke-linejoin="round"/><path d="M6.2 3.8V7.4" stroke="#1e1e1e" stroke-width="1.5"/><circle cx="6.2" cy="9" r=".85" fill="#1e1e1e"/></svg>
<div id="t104" class="t" style="left:661.8px;top:692px;color:#e9e9e9;letter-spacing:0.06px">驗證 (XHTML5): 屬性 'cellpadding' 不是 'table' 元素的有效屬</div>
<div id="t105" class="t" style="left:900px;top:697.2px;color:#e9e9e9;letter-spacing:-0.34px">dp105108W2</div>
<div id="t106" class="t" style="left:1011.2px;top:697.2px;color:#e9e9e9;letter-spacing:-0.1px">MasterPage.master</div>
<div id="t107" class="t" style="left:1122.3px;top:697.2px;color:#e9e9e9">26</div>
<div id="t108" class="t" style="left:661.8px;top:702.4px;color:#e9e9e9;letter-spacing:-1.6px">性。</div>
<div class="a" style="left:584.3px;top:647px;width:659.3px;height:76.8px;overflow:hidden;pointer-events:none"><svg style="left:23.3px;top:73.4px" width="12.4" height="12" viewBox="0 0 12.4 12"><path d="M6.2 0.8L11.8 10.6H0.6Z" fill="#f6cf3e" stroke="#f6cf3e" stroke-width="1" stroke-linejoin="round"/><path d="M6.2 3.8V7.4" stroke="#1e1e1e" stroke-width="1.5"/><circle cx="6.2" cy="9" r=".85" fill="#1e1e1e"/></svg>
<div id="t109" class="t" style="left:77.5px;top:67.6px;color:#e9e9e9;letter-spacing:0.04px">驗證 (XHTML5): 屬性 'cellspacing' 不是 'table' 元素的有效屬</div>
<div id="t110" class="t" style="left:315.7px;top:72px;color:#e9e9e9;letter-spacing:-0.34px">dp105108W2</div>
<div id="t111" class="t" style="left:426.9px;top:72px;color:#e9e9e9;letter-spacing:-0.1px">MasterPage.master</div>
<div id="t112" class="t" style="left:538px;top:72px;color:#e9e9e9">31</div>
</div>
<div class="a" style="left:1243.6px;top:632.4px;width:12.8px;height:91.6px;background:#3e3e42"></div>
<svg style="left:1246.4px;top:637.6px" width="7" height="4" viewBox="0 0 7 4"><path d="M0 4L3.5 0L7 4Z" fill="#999"/></svg>
<div class="a" style="left:1246.6px;top:646.6px;width:6.6px;height:48.6px;background:#686868"></div>
<svg style="left:1246.4px;top:715px" width="7" height="4" viewBox="0 0 7 4"><path d="M0 0H7L3.5 4Z" fill="#999"/></svg>
<div class="a" style="left:584.3px;top:724px;width:672.1px;height:18.4px;background:#2d2d30"></div>
<div id="t113" class="t" style="left:588.8px;top:725.8px;color:#c6c6c6;letter-spacing:-0px">呼叫堆疊</div>
<div id="t114" class="t" style="left:633.6px;top:725.8px;color:#c6c6c6;letter-spacing:-0.1px">中斷點</div>
<div id="t115" class="t" style="left:669px;top:725.8px;color:#c6c6c6;letter-spacing:0.04px">例外狀況設定</div>
<div id="t116" class="t" style="left:731px;top:725.8px;color:#c6c6c6;letter-spacing:-0.05px">命令視窗</div>
<div id="t117" class="t" style="left:775.5px;top:725.8px;color:#c6c6c6;letter-spacing:0.05px">即時運算視窗</div>
<div id="t118" class="t" style="left:837px;top:725.8px;color:#c6c6c6;letter-spacing:0.1px">輸出</div>
<div class="a" style="left:860px;top:724px;width:42.8px;height:15.6px;background:#252526"></div>
<div id="t119" class="t" style="left:863.8px;top:725.8px;color:#1c97ea;letter-spacing:0.1px">錯誤清單</div>
<div class="a" style="left:0px;top:743.6px;width:1280px;height:16.4px;background:#cb5200"></div>
<div id="t120" class="t" style="right:1232.6px;top:746.5px;color:#fff">選取擴充項控制項...</div>
<svg style="left:1159.6px;top:747.6px" width="7" height="8.4" viewBox="0 0 7 8.4"><path d="M3.5 8.4V1M0.6 3.8L3.5 0.8L6.4 3.8" fill="none" stroke="#fff" stroke-width="1.2"/></svg>
<div id="t121" class="t" style="left:1174px;top:746.4px;color:#fff;letter-spacing:0.01px">新增至原始檔控制</div>
<svg style="left:1249.6px;top:750px" width="6.4" height="3.6" viewBox="0 0 6.4 3.6"><path d="M0 3.6L3.2 0L6.4 3.6Z" fill="#fff"/></svg>
<svg style="left:1271px;top:751px" width="7" height="7" viewBox="0 0 7 7"><path d="M6 0V1M6 3V4M3 3V4M6 6V7M3 6V7M0 6V7" stroke="#e8a680" stroke-width="1.2"/></svg>
</body>
</html>
